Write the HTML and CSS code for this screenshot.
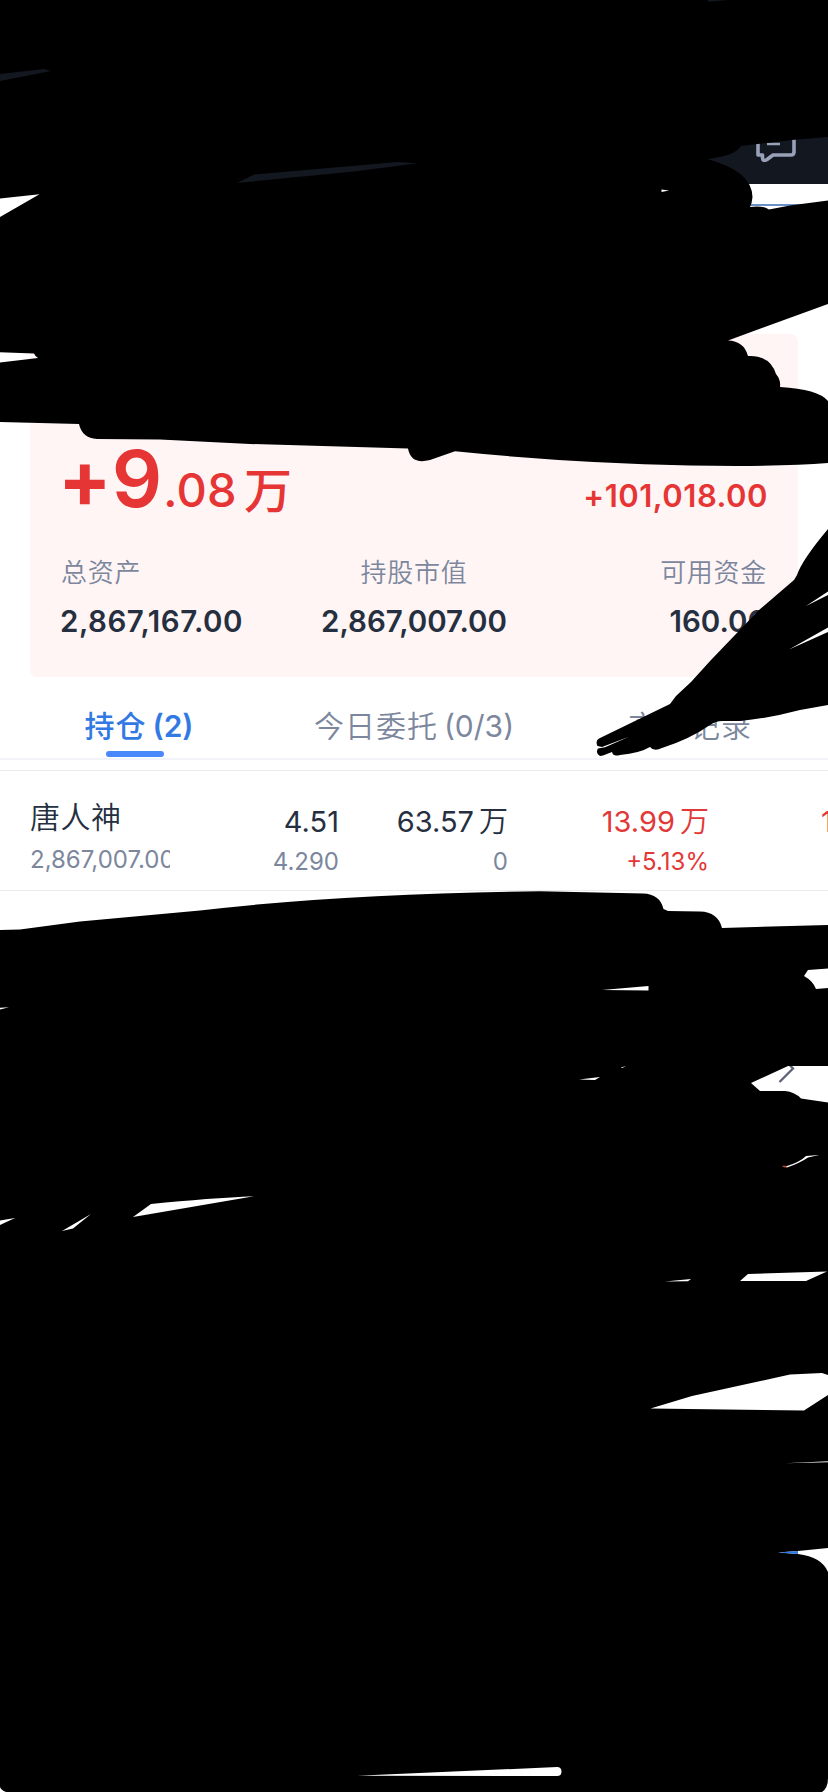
FILE: index.html
```html
<!DOCTYPE html>
<html lang="zh-CN">
<head>
<meta charset="utf-8">
<title>持仓</title>
<link rel="stylesheet" href="styles.css">
</head>
<body>
<div class="screen">
  <header class="header">
    <svg class="chat" width="40" height="42" viewBox="0 0 40 42" fill="none" stroke="#99a1b8" stroke-width="3.600" stroke-linejoin="round" stroke-linecap="round"><path d="M2 3V35H6.500V38Q7 42 11 39.500L17 35H35Q38 35 38 32V3Z"/><path d="M11 24H24" stroke-width="2.500" stroke-linecap="butt"/></svg>
  </header>
  <div class="account"></div>
  <section class="card">
    <div class="profit">
      <div class="total"><span class="int"><span class="sign">+</span>9</span><span class="dec">.08</span><span class="unit">万</span></div>
      <div class="today">+101,018.00</div>
    </div>
    <div class="assets">
      <div><div class="label">总资产</div><div class="value">2,867,167.00</div></div>
      <div><div class="label">持股市值</div><div class="value">2,867,007.00</div></div>
      <div><div class="label">可用资金</div><div class="value">160.00</div></div>
    </div>
  </section>
  <nav class="tabs">
    <div class="tab active"><span class="cn">持仓</span><span>(2)</span></div>
    <div class="tab"><span class="cn">今日委托</span><span>(0/3)</span></div>
    <div class="tab"><span class="cn">交易记录</span></div>
  </nav>
  <section class="holding">
    <div class="stock"><div class="name">唐人神</div><div class="amount">2,867,007.00</div></div>
    <div class="cell"><div class="main">4.51</div><div class="sub">4.290</div></div>
    <div class="cell"><div class="main">63.57<span class="wan">万</span></div><div class="sub">0</div></div>
    <div class="cell up"><div class="main">13.99<span class="wan">万</span></div><div class="sub">+5.13%</div></div>
    <div class="cell next up"><div class="main">1</div></div>
  </section>
  <div class="more">
    <svg width="18" height="30" viewBox="0 0 18 30" fill="none" stroke="#5d6375" stroke-width="2.300"><path d="M2 1L15 14.500L1.500 28"/></svg>
  </div>

  <svg class="scribble" width="828" height="1792" viewBox="0 0 828 1792">
    <path fill-rule="evenodd" d="M0 0H707L709 1.700L728 0H828V137L792 140L741 146Q735 156 707 159Q752 171 752.500 197Q752 203 750 207Q762 205 769 209.500L790 205.500L828 200.500V304L728 340.500Q744 341 748 356Q770 355 776 374Q781 380 780 387Q818 389 828 401V463Q780 467 690 465.500Q570 463 455 451.300L430 460Q411 465 408 448.500L250 444L160 439.500L97 439Q82 438 79 424L0 422V362.500L38 358Q35 356 34 353.500L0 352.300V217L39.500 194.300L0 198.500V81L51 71L44 69L0 74Z
      M237 183L254 174.500L397 162L418 163.300L354 171.500Z
      M661.500 189.500L669 190.500L661.500 192Z"/>
    <path d="M828 529Q802 560 797 575L794 580L759 610L711 660L691 682L676 696L670 704L599 738.500Q595 741 597.500 746L602 747L629 736.700L605 747.300L598 748.500Q595 753 600 756L603 755.500L612 752Q613 757 620 755Q640 753 650 747Q654 752 662 748Q690 739 710 725Q716 721 722 721H740Q770 718 800 710L828 705V632L789 649.500L828 627.500V595L806 606L828 591.500Z"/>
    <path fill-rule="evenodd" d="M0 930L20 929.500L80 921.500L200 910.500Q350 893 540 891.300L643 893.500Q660 894 663.500 909L668 911L700 911.500Q718 912 722 928L828 925V968.500L808 970L804 976Q813 981 816 989L828 988V1066H788L751 1083L760 1091H785Q795 1092 801 1098.500L828 1102.500V1375L822 1373L790 1374.500L692 1396L650.500 1408.500L804 1410.500L828 1395V1461.300L785 1463.300L828 1462.300V1548L798 1551L778 1552.500L798 1554Q822 1557 828 1572V1778Q828 1788 822 1792H6Q1 1790 0 1787V1225L15 1218L0 1220.500V1009.500L9 1007.300L0 1007.800Z
      M62 1231L91 1214L73 1228.500Z
      M133 1217L151 1204Q210 1198 254 1196.200Z
      M602 990L648.500 986V990.500Z
      M579 1079.500L600 1077L595 1080Z M621 1067.300L626 1066.300L622 1068Z
      M782 1166H787Q800 1162 806 1156L819 1155L808 1157.500Q800 1163 787 1167.500Z
      M665 1281.500L691 1279L688 1281.200Z
      M740 1281L748 1274L827 1271.500L806 1281Z
      M357 1775.800L557 1767Q561.500 1767 561.500 1771.500Q561.500 1776 557 1776Z"/>
    <path fill="#2878e8" d="M778 1552.500L798 1551V1554Z"/>
    <path fill="#c4492e" d="M782.500 1165.800H786L787 1167L784 1167.400Z"/>
  </svg>
</div>
</body>
</html>
```
FILE: styles.css
```css
* { box-sizing: border-box; }
body { margin: 0; background: #fff; }
.screen {
  position: relative;
  width: 828px;
  height: 1792px;
  overflow: hidden;
  background: #fff;
  font-family: Inter, "Noto Sans CJK SC", sans-serif;
  color: #252f40;
}
.header {
  height: 184px;
  padding: 120px 32px 0 0;
  background: #131720;
  display: flex;
  justify-content: flex-end;
}
.chat { display: block; }
.account {
  height: 130px;
  margin: 20px 0 0 60px;
  border-top: 2px solid #6a90c6;
}
.card {
  height: 343px;
  margin: 0 30px;
  padding: 104px 31px 0;
  border-radius: 7px;
  background: #fff5f5;
}
.profit {
  height: 80px;
  display: flex;
  justify-content: space-between;
  align-items: baseline;
  color: #e63535;
  line-height: 80px;
}
.total { display: flex; align-items: baseline; margin-left: -3px; }
.int { font-size: 79px; font-weight: 600; }
.sign { font-weight: 700; }
.dec { font-size: 47px; font-weight: 500; letter-spacing: 0.3px; margin-left: 1px; }
.unit { font-size: 48px; font-weight: 500; margin-left: 7px; position: relative; top: 1px; }
.today { font-size: 31px; font-weight: 600; letter-spacing: 0.5px; margin-right: -1px; }
.assets {
  margin-top: 37px;
  display: grid;
  grid-template-columns: repeat(3, 1fr);
  text-align: center;
}
.assets > :first-child { text-align: left; }
.assets > :last-child { text-align: right; }
.label {
  font-size: 26px;
  font-weight: 350;
  line-height: 36px;
  letter-spacing: 0.7px;
  color: #7c879d;
}
.value {
  margin-top: 12px;
  font-size: 29.500px;
  font-weight: 600;
  line-height: 36px;
}
.assets > :first-child .value { margin-left: -1px; letter-spacing: 0.5px; }
.tabs {
  height: 83px;
  padding-top: 29px;
  display: grid;
  grid-template-columns: repeat(3, 1fr);
  border-bottom: 2px solid #f3f4fb;
  color: #7c879d;
  font-size: 30px;
  line-height: 40px;
}
.tab { display: flex; justify-content: center; gap: 6px; position: relative; }
.cn { letter-spacing: 1px; font-weight: 350; }
.active { color: #3379e3; font-weight: 600; padding-left: 2px; }
.active .cn { font-weight: 500; }
.active::after {
  content: "";
  position: absolute;
  left: 106px;
  top: 45px;
  width: 58px;
  height: 6px;
  border-radius: 3px;
  background: #4a87fa;
}
.holding {
  height: 121px;
  margin-top: 10px;
  border-top: 1px solid #e8eaed;
  border-bottom: 1px solid #e8eaed;
  display: grid;
  grid-template-columns: 170px 169px 169px 201px 119px;
}
.stock { padding: 26px 0 0 30px; overflow: hidden; }
.name { font-size: 30px; line-height: 40px; letter-spacing: 0.5px; white-space: nowrap; font-weight: 350; }
.amount { margin-top: 7px; font-size: 24px; line-height: 32px; color: #7c879d; white-space: nowrap; }
.cell { padding-top: 31px; text-align: right; }
.main { font-size: 29px; line-height: 40px; }
.wan { margin-left: 5px; font-weight: 350; }
.sub { margin-top: 4px; font-size: 24px; line-height: 32px; color: #7c879d; }
.up, .up .sub { color: #e23838; }
.next { padding-left: 112px; text-align: left; }
.more {
  height: 60px;
  margin-top: 163px;
  padding-right: 32px;
  display: flex;
  justify-content: flex-end;
}
.scribble { position: absolute; left: 0; top: 0; }
```
